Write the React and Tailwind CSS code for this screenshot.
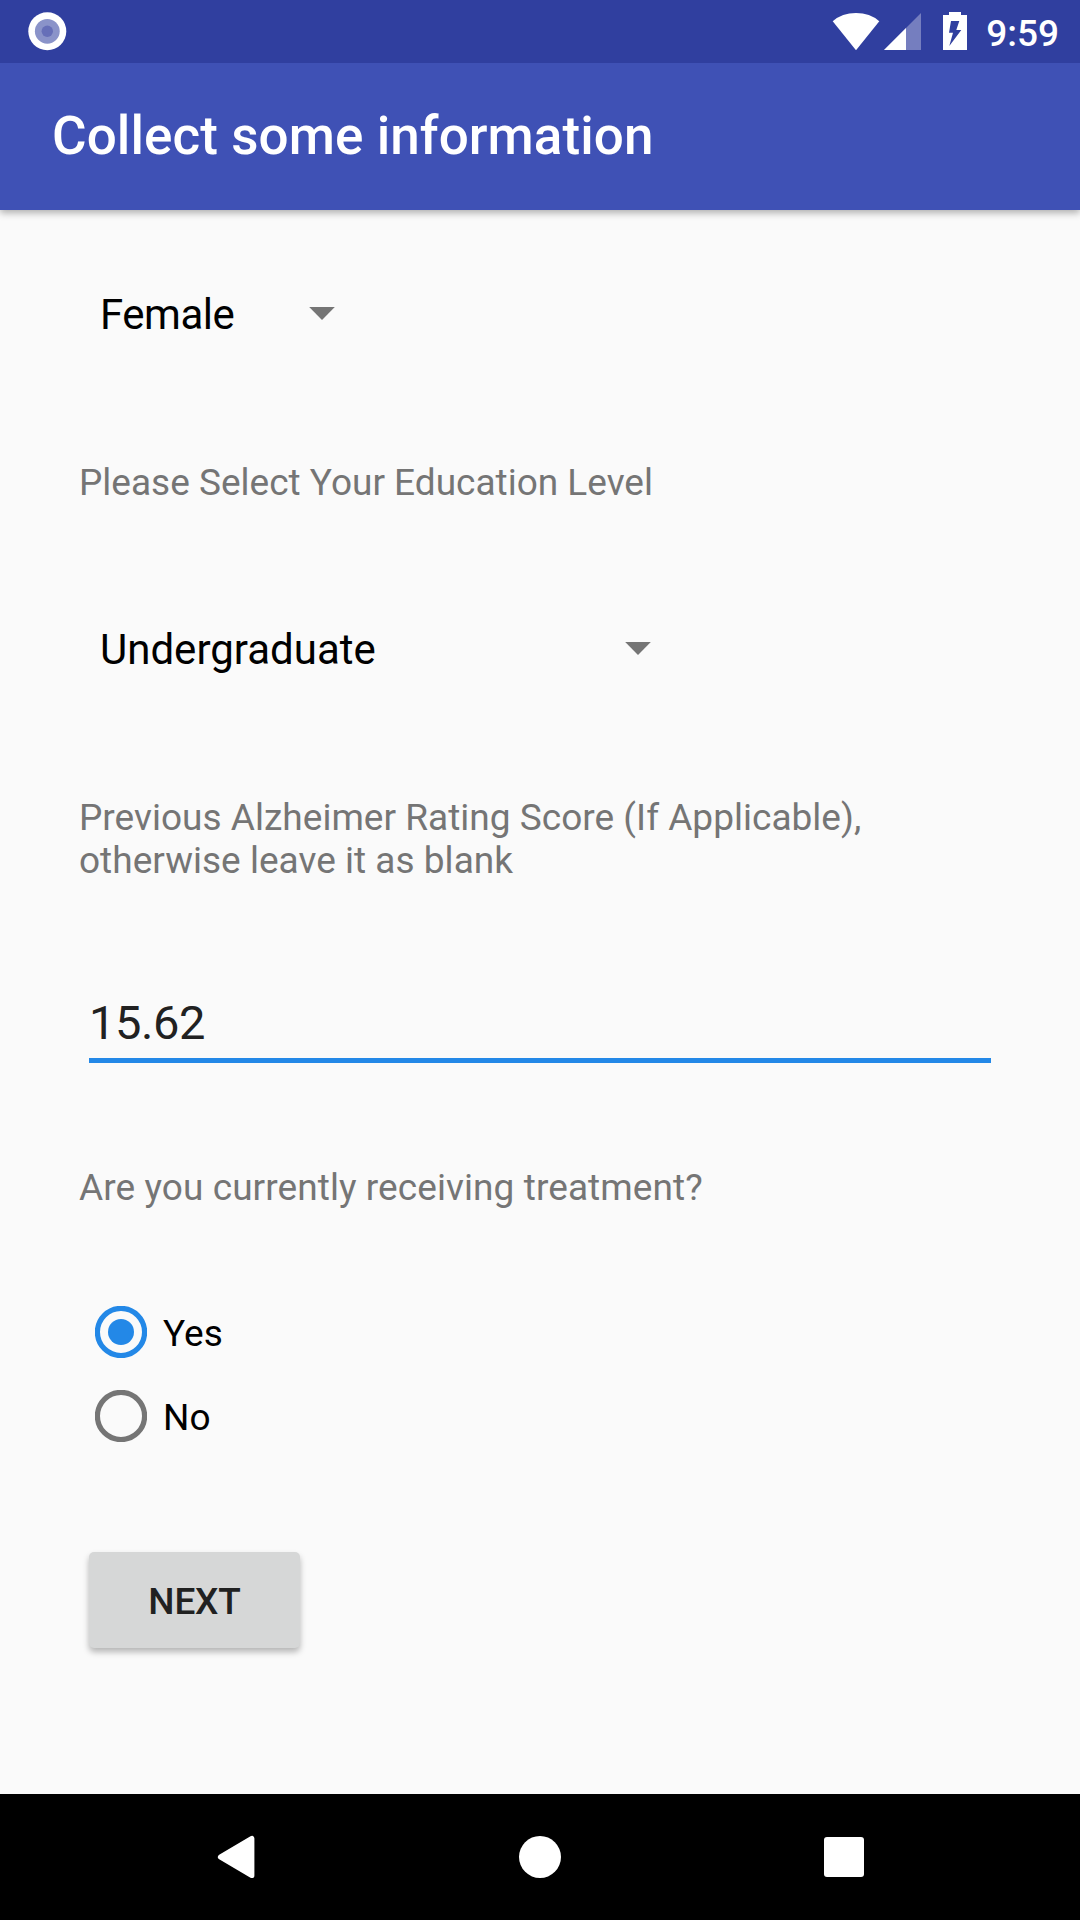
import React from "react";

function StatusBar() {
  return (
    <div className="relative z-10 flex h-[63px] shrink-0 items-center bg-[#303f9f] pl-[28px] pr-[21px]">
      <svg width="39" height="39" viewBox="0 0 39 39">
        <circle cx="19.3" cy="19.3" r="19" fill="#fff" />
        <circle cx="19.3" cy="19.3" r="12.4" fill="#8a93c9" />
        <circle cx="19.3" cy="19.3" r="5.7" fill="#666fb8" />
      </svg>
      <svg className="ml-auto" width="140" height="63" viewBox="830 0 140 63">
        <path d="M832.7 21.2 Q842 13 856 13 Q870 13 879.3 21.2 L856 50.3 Z" fill="#fff" />
        <path d="M921 13 V50 H884 Z" fill="#757ebf" />
        <path d="M906 28 V50 H884 Z" fill="#fff" />
        <path d="M943 15 H949 V12 H961 V15 H967 V50 H943 Z" fill="#fff" />
        <path d="M951 21 H959.3 L956.3 30 H961.3 L949.3 46 L953 32.7 H949 Z" fill="#303f9f" />
      </svg>
      <span className="ml-[16px] mt-[3px] text-[37px] font-medium leading-none text-white">9:59</span>
    </div>
  );
}

function Caret() {
  return (
    <svg className="mb-[2px]" width="26" height="13" viewBox="0 0 26 13">
      <path d="M0.2 0 H25.8 L13 13 Z" fill="#757575" />
    </svg>
  );
}

function Radio({ checked, label }) {
  return (
    <label className="flex h-[84px] items-center gap-[16px]">
      <svg width="52" height="52" viewBox="0 0 52 52">
        <circle cx="26" cy="26" r="23.6" fill="none" strokeWidth="5.2" stroke={checked ? "#2388e7" : "#757575"} />
        {checked && <circle cx="26" cy="26" r="13" fill="#2388e7" />}
      </svg>
      <span className="pt-[2px] text-[37px] leading-[43px] text-black">{label}</span>
    </label>
  );
}

export default function App() {
  return (
    <div className="flex h-[1920px] w-[1080px] flex-col overflow-hidden bg-[#fafafa] font-['Roboto',sans-serif]">
      <StatusBar />
      <header className="flex h-[147px] shrink-0 items-center bg-[#3f51b5] pl-[52px] shadow-[0_3px_7px_rgba(0,0,0,0.3)]">
        <h1 className="text-[53px] font-medium leading-none tracking-[0.08px] text-white">Collect some information</h1>
      </header>
      <main className="flex flex-1 flex-col px-[79px] text-[37px] leading-[43px] text-[#757575]">
        <div className="mt-[73px] flex h-[63px] w-[255.5px] items-center justify-between pl-[21px] text-[42px] text-black">
          <span className="tracking-[-0.5px]">Female</span> <Caret />
        </div>
        <p className="mt-[115px]">Please Select Your Education Level</p>
        <div className="mt-[114px] flex h-[63px] w-[571.5px] items-center justify-between pl-[21px] text-[42px] text-black">
          Undergraduate <Caret />
        </div>
        <p className="mt-[115px] tracking-[0.02px]">
          Previous Alzheimer Rating Score (If Applicable),
          <br />
          otherwise leave it as blank
        </p>
        <div className="mx-[10px] mt-[111px] h-[70px] border-b-[5px] border-[#2388e7] text-[47px] leading-[60px] tracking-[-0.4px] text-[#212121]">15.62</div>
        <p className="mt-[103px] tracking-[0.08px]">Are you currently receiving treatment?</p>
        <div className="mt-[81px] pl-[16px]">
          <Radio checked label="Yes" />
          <Radio label="No" />
        </div>
        <button className="ml-[10px] mt-[94px] h-[96px] w-[211px] rounded-[5px] bg-[#d6d7d7] pt-[2px] text-[37px] font-medium tracking-[-0.2px] text-[#212121] shadow-[0_4px_6px_rgba(0,0,0,0.28)]">NEXT</button>
      </main>
      <nav className="flex h-[126px] shrink-0 items-center bg-black">
        <svg width="1080" height="126" viewBox="0 1794 1080 126" fill="#fff">
          <path d="M220.5 1857 L251.8 1838.6 V1875.4 Z" stroke="#fff" strokeWidth="5.2" strokeLinejoin="round" />
          <circle cx="540" cy="1857" r="21" />
          <rect x="824" y="1837" width="40" height="40" rx="3" />
        </svg>
      </nav>
    </div>
  );
}
